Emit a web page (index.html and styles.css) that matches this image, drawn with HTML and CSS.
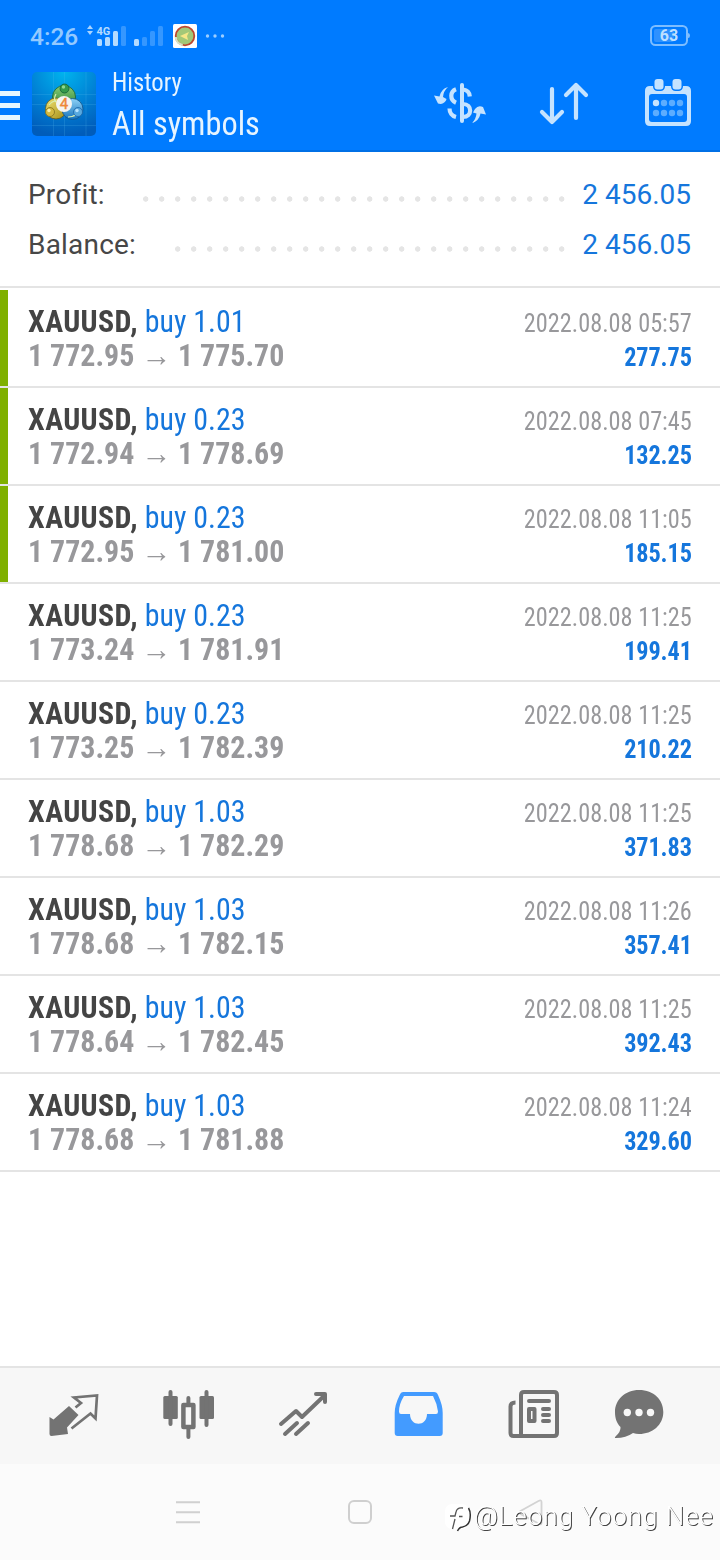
FILE: index.html
```html
<!DOCTYPE html>
<html lang="en">
<head>
<meta charset="utf-8">
<title>History</title>
<link rel="stylesheet" href="styles.css">
</head>
<body>
<div class="screen">
<header class="top">
  <div class="status">
    <span class="clock">4:26</span>
    <svg class="signals" width="140" height="30" viewBox="86 21 140 30">
      <path d="M87 29l3-4 3 4zM87 31l3 4 3-4z" fill="#a9d4ff"/>
      <text x="96.500" y="34.500" class="net">4G</text>
      <g fill="#b4dbff"><rect x="97" y="39" width="5" height="7" rx="1.5"/><rect x="105" y="37" width="5" height="9" rx="1.5"/><rect x="113" y="31" width="5" height="15" rx="1.5"/><rect x="134" y="39" width="5" height="7" rx="1.5"/></g>
      <g fill="#3597ff"><rect x="121" y="26" width="5" height="20" rx="1.5"/><rect x="142" y="37" width="5" height="9" rx="1.5"/><rect x="150" y="31" width="5" height="15" rx="1.5"/><rect x="158" y="26" width="5" height="20" rx="1.5"/></g>
      <rect x="173" y="24" width="24" height="24" rx="1.5" fill="#fff"/>
      <circle cx="185" cy="36" r="9.3" fill="#a3c878" stroke="#bd4630" stroke-width="1.8"/>
      <path d="M175.7 37a9.3 9.3 0 0 0 7 8" fill="none" stroke="#d7e5c6" stroke-width="2.2"/>
      <path d="M180 36l9-4-2 4 1 4z" fill="#f7e787"/>
      <g fill="#9bcdff"><circle cx="207.500" cy="36" r="1.7"/><circle cx="215" cy="36" r="1.7"/><circle cx="222.500" cy="36" r="1.7"/></g>
    </svg>
    <svg class="battery" width="42" height="24" viewBox="649 24 42 24">
      <rect x="651" y="26" width="36" height="19" rx="4.500" fill="none" stroke="#7dbdff" stroke-width="2"/>
      <path d="M688 33q2 0 2 2.500t-2 2.500z" fill="#7dbdff"/>
      <rect x="654" y="29" width="20" height="13" rx="2" fill="#2e91ff"/>
      <text x="669" y="41" text-anchor="middle" class="charge">63</text>
    </svg>
  </div>
  <div class="toolbar">
    <span class="burger"><i></i><i></i><i></i></span>
    <svg class="logo" width="64" height="64" viewBox="0 0 64 64">
      <defs>
        <radialGradient id="bg" cx=".5" cy="0" r="1"><stop offset="0" stop-color="#00b4ee"/><stop offset=".55" stop-color="#0080d4"/><stop offset="1" stop-color="#005cba"/></radialGradient>
        <linearGradient id="gr" x2="0" y2="1"><stop stop-color="#8bcf74"/><stop offset="1" stop-color="#217d39"/></linearGradient>
        <linearGradient id="ye" x2="1" y2="1"><stop stop-color="#f2e476"/><stop offset="1" stop-color="#a28c14"/></linearGradient>
        <linearGradient id="bl" x2="0" y2="1"><stop stop-color="#8dd2f6"/><stop offset="1" stop-color="#1673bd"/></linearGradient>
      </defs>
      <rect width="64" height="64" rx="5" fill="url(#bg)"/>
      <path d="M21.500 0v64M32.500 0v64M54 0v64M0 22.500h64M0 32.500h64M0 53.500h64" stroke="#5abff0" stroke-opacity=".2" fill="none"/>
      <g stroke-width=".8">
        <circle cx="32" cy="25" r="11.500" fill="url(#gr)" stroke="#145f32"/>
        <circle cx="24" cy="36.500" r="10.500" fill="url(#ye)" stroke="#665a16"/>
        <circle cx="40.500" cy="37" r="10.500" fill="url(#bl)" stroke="#125288"/>
        <path d="M24 22q-3 5 0 8M17 33q3-4 7-4M36 45q9 0 12-8" stroke="#d9efb0" stroke-width="1.200" fill="none"/>
        <circle cx="32.500" cy="16.500" r="4.500" fill="#359a4b" stroke="#125d35"/>
        <circle cx="18" cy="40" r="4.500" fill="#d3b940" stroke="#82701a"/>
        <circle cx="46" cy="40" r="4.500" fill="#58a9df" stroke="#1a65a8"/>
        <circle cx="31.500" cy="15" r="1.700" fill="#90d890" stroke="none"/><circle cx="17" cy="38.500" r="1.700" fill="#f7efaa" stroke="none"/><circle cx="45" cy="38.500" r="1.700" fill="#b5e2ff" stroke="none"/>
      </g>
      <circle cx="32" cy="32" r="8" fill="#f4f4f1"/>
      <text x="32" y="37" text-anchor="middle" class="four">4</text>
    </svg>
    <div class="titles"><div class="kicker">History</div><div class="title">All symbols</div></div>
    <svg class="actions" width="260" height="56" viewBox="432 76 260 56" fill="none" stroke="#c5e3ff" stroke-linecap="round" stroke-linejoin="round">
      <path d="M462 85v36" stroke-width="4"/>
      <path d="M456 89.300C450 91.500 449.500 100 456 102.800M449.500 108.500C449.500 112.500 452 116 456 117M463 89.500C467 90 469.500 92 469.800 96.500M463 104C472.500 104 472.500 117 463 117" stroke-width="4.200" stroke-linecap="butt"/>
      <path d="M448 87q-7 2-8.500 9.500l-5.500-1 4 8q5 1.500 8-3l.5-1.500-3.500-2q.5-6 5-10z" fill="#c5e3ff" stroke="none"/>
      <path d="M472 123q7-2 8.500-9.500l5.500 1-3-7.500q-5-2-8 2l-2 3.500 3.500 1q-.5 5.500-4.500 9.500z" fill="#c5e3ff" stroke="none"/>
      <path d="M552 89v33M542 112l10 10 10-10M576 118V86M566 95l10-10 10 10" stroke-width="4.200"/>
      <path d="M650 86h36q5 0 5 5v30q0 5-5 5h-36q-5 0-5-5V91q0-5 5-5z" fill="#c5e3ff" stroke="none"/>
      <rect x="649" y="94" width="38" height="28" rx="3" fill="#007bff" stroke="none"/>
      <rect x="654.500" y="79" width="9" height="10.500" rx="3" fill="#c5e3ff" stroke="#007bff" stroke-width="3" paint-order="stroke"/>
      <rect x="672.500" y="79" width="9" height="10.500" rx="3" fill="#c5e3ff" stroke="#007bff" stroke-width="3" paint-order="stroke"/>
      <g fill="#5cadff" stroke="none"><circle cx="656" cy="103" r="3.200" fill="#c5e3ff"/><circle cx="664" cy="103" r="3.200"/><circle cx="672" cy="103" r="3.200"/><circle cx="680" cy="103" r="3.200"/><circle cx="656" cy="113" r="3.200"/><circle cx="664" cy="113" r="3.200"/><circle cx="672" cy="113" r="3.200"/><circle cx="680" cy="113" r="3.200"/></g>
    </svg>
  </div>
</header>
<section class="summary">
  <div class="sum"><span>Profit:</span><i class="dots long"></i><b>2 456.05</b></div>
  <div class="sum"><span>Balance:</span><i class="dots"></i><b>2 456.05</b></div>
</section>
<main class="deals">
  <article class="deal mark"><div class="left"><div><strong>XAUUSD,</strong> <em>buy 1.01</em></div><div class="price">1 772.95 <u>→</u> 1 775.70</div></div><div class="right"><time>2022.08.08 05:57</time><div class="gain">277.75</div></div></article>
  <article class="deal mark"><div class="left"><div><strong>XAUUSD,</strong> <em>buy 0.23</em></div><div class="price">1 772.94 <u>→</u> 1 778.69</div></div><div class="right"><time>2022.08.08 07:45</time><div class="gain">132.25</div></div></article>
  <article class="deal mark"><div class="left"><div><strong>XAUUSD,</strong> <em>buy 0.23</em></div><div class="price">1 772.95 <u>→</u> 1 781.00</div></div><div class="right"><time>2022.08.08 11:05</time><div class="gain">185.15</div></div></article>
  <article class="deal"><div class="left"><div><strong>XAUUSD,</strong> <em>buy 0.23</em></div><div class="price">1 773.24 <u>→</u> 1 781.91</div></div><div class="right"><time>2022.08.08 11:25</time><div class="gain">199.41</div></div></article>
  <article class="deal"><div class="left"><div><strong>XAUUSD,</strong> <em>buy 0.23</em></div><div class="price">1 773.25 <u>→</u> 1 782.39</div></div><div class="right"><time>2022.08.08 11:25</time><div class="gain">210.22</div></div></article>
  <article class="deal"><div class="left"><div><strong>XAUUSD,</strong> <em>buy 1.03</em></div><div class="price">1 778.68 <u>→</u> 1 782.29</div></div><div class="right"><time>2022.08.08 11:25</time><div class="gain">371.83</div></div></article>
  <article class="deal"><div class="left"><div><strong>XAUUSD,</strong> <em>buy 1.03</em></div><div class="price">1 778.68 <u>→</u> 1 782.15</div></div><div class="right"><time>2022.08.08 11:26</time><div class="gain">357.41</div></div></article>
  <article class="deal"><div class="left"><div><strong>XAUUSD,</strong> <em>buy 1.03</em></div><div class="price">1 778.64 <u>→</u> 1 782.45</div></div><div class="right"><time>2022.08.08 11:25</time><div class="gain">392.43</div></div></article>
  <article class="deal"><div class="left"><div><strong>XAUUSD,</strong> <em>buy 1.03</em></div><div class="price">1 778.68 <u>→</u> 1 781.88</div></div><div class="right"><time>2022.08.08 11:24</time><div class="gain">329.60</div></div></article>
</main>
<nav class="tabs">
  <svg width="52" height="56" viewBox="48 1386 52 56"><path d="M49.500 1417l4 2.500 15.500-13.500 9.500 9-11.500 12.500 1 6.500-16.500 2q-2 0-2-2z" fill="#737373"/><path d="M75.500 1407.500l5.500-4.500-7-5.500 23-2-1.500 23-5-5L71.500 1428.500" fill="none" stroke="#737373" stroke-width="2.700"/></svg>
  <svg width="52" height="56" viewBox="162 1386 52 56" fill="#737373"><rect x="163.300" y="1396" width="14.500" height="23" rx="1.500"/><rect x="199.500" y="1396" width="14.500" height="23" rx="1.500"/><path d="M170.500 1392v32M206.500 1392v33M188.400 1398v6M188.400 1428v9" stroke="#737373" stroke-width="4" stroke-linecap="round"/><rect x="183.400" y="1405" width="10" height="22" fill="none" stroke="#737373" stroke-width="4.500" stroke-linejoin="round"/></svg>
  <svg width="52" height="56" viewBox="277 1386 52 56" fill="none" stroke="#737373" stroke-width="4" stroke-linecap="round" stroke-linejoin="round"><path d="M281 1424l15-13 6 6 23-22M316 1394h9v8M285 1434l12-11M296 1434l12-11"/></svg>
  <svg width="52" height="56" viewBox="392 1386 52 56"><path fill-rule="evenodd" fill="#439bff" d="M403 1392h31q3 0 4 3 4.700 10 4.700 18v20q0 3-3 3h-42q-3 0-3-3v-20q0-8 5-18 1-3 3.300-3zM404 1396q-5 8-5 15.500 0 2.500 2 2.500h9c0 13 17 13 17 0h9q2 0 2-2.500-1-8-5-15.500z"/></svg>
  <svg width="52" height="56" viewBox="508 1386 52 56" fill="none" stroke="#737373" stroke-width="4" stroke-linejoin="round"><path d="M515.500 1402.500q-5 0-5 4V1433q0 3 3 3h40.500q3 0 3-3v-38q0-3-3-3h-30q-3 0-3 3v41"/><path d="M529 1401h20M543 1409h6M543 1415h6M543 1421h6" stroke-linecap="round"/><rect x="529" y="1409" width="5.500" height="12"/></svg>
  <svg width="52" height="56" viewBox="613 1386 52 56"><path fill="#737373" d="M639 1390c15 0 24.300 10 24.300 22 0 13-11 22-24.300 22q-3 0-6-1-7 5-17 5-2 0-.5-1.500 5.500-5 5-9.500c-4-4-5.500-9-5.500-15 0-12 10-22 24-22z"/><g fill="#f7f7f7"><circle cx="627.300" cy="1412.500" r="3.700"/><circle cx="639" cy="1412.500" r="3.700"/><circle cx="650.500" cy="1412.500" r="3.700"/></g></svg>
</nav>
<footer class="system">
  <svg width="720" height="96" viewBox="0 1464 720 96">
    <path d="M176 1502.300h24M176 1512.300h24M176 1522.300h24" stroke="#d0d0d0" stroke-width="2"/>
    <rect x="349" y="1501" width="22" height="22" rx="5" fill="none" stroke="#cfcfcf" stroke-width="2"/>
    <path d="M541.500 1502v21q0 2-2 1l-19-10q-2-1.500 0-3l18-10q3-1.500 3 1z" fill="none" stroke="#d3d3d3" stroke-width="1.800"/>
    <rect x="445" y="1504" width="24" height="25" rx="7" fill="#fff"/>
    <path d="M463 1508q-6-1-7 4l-1 4h-5M455 1519l-2.500 10M459 1516.500h3.500" stroke="#555" stroke-width="1.300" fill="none"/>
    <path d="M468.500 1508q3 5 1 13-1.500 5-7 6-3 0-5 4" stroke="#333" stroke-width="1.500" fill="none"/>
    <text x="474" y="1525" class="credit" textLength="239">@Leong Yoong Nee</text>
  </svg>
</footer>
</div>
</body>
</html>
```
FILE: styles.css
```css
* { box-sizing: border-box; }
body { margin: 0; background: #fff; font-family: Roboto, "Liberation Sans", sans-serif; }
svg { display: block; }
.screen { width: 720px; height: 1560px; display: flex; flex-direction: column; }
.top { height: 152px; flex: none; background: #007bff; border-bottom: 2px solid #0070e6; color: #e6f4ff; }
.status { height: 72px; display: flex; align-items: flex-start; padding: 21px 29px 0 30px; }
.clock { width: 56px; font-size: 24.500px; font-weight: 500; line-height: 32px; color: #94c9ff; }
.battery { margin: 3px 0 0 auto; }
.net { font: bold 11px Roboto, sans-serif; fill: #b4dbff; }
.charge { font: bold 16px Roboto, sans-serif; fill: #bfe0ff; }
.four { font: 15px Roboto, sans-serif; fill: #ee8838; stroke: #ee8838; stroke-width: .4px; }
.toolbar { display: flex; align-items: flex-start; padding-right: 28px; }
.burger { width: 20px; margin: 19px 12px 0 0; display: flex; flex-direction: column; gap: 7px; }
.burger i { height: 5px; background: #e6f6ff; }
.titles { margin-left: 16px; font-family: "Roboto Condensed", Roboto, sans-serif; font-stretch: 75%; white-space: nowrap; transform: scaleX(.951); transform-origin: left; }
.kicker { font-size: 26px; line-height: 20px; }
.title { font-size: 34px; line-height: 34px; margin-top: 14px; }
.actions { margin: 4px 0 0 auto; }
.summary { height: 136px; flex: none; border-bottom: 2px solid #e4e4e4; padding: 18px 28px 0; }
.sum { display: flex; height: 50px; line-height: 50px; font-size: 28px; color: #474747; }
.sum span { letter-spacing: .2px; }
.sum b { font-weight: 400; color: #1576dc; width: 110px; padding-right: 1px; text-align: right; white-space: nowrap; }
.dots { width: 394px; height: 8px; margin: 25px 14px 0 auto; background: radial-gradient(circle at 3.700px 4px, #e5e5e5 2.400px, transparent 3px) 0 0 / 16px 8px; }
.dots.long { width: 426px; }
.deals { padding-top: 2px; flex: 1; font-family: "Roboto Condensed", Roboto, sans-serif; font-stretch: 75%; }
.deal { height: 98px; border-bottom: 2px solid #e4e4e4; display: flex; justify-content: space-between; padding: 0 28px; white-space: nowrap; }
.mark { box-shadow: inset 8px 0 #7fb000; }
.left { padding-top: 14px; font-size: 32px; line-height: 34px; transform: scaleX(.935); transform-origin: left; }
.left strong { color: #444; letter-spacing: .42px; }
.left em { font-style: normal; color: #1576dc; }
.price { font-weight: 700; color: #98989b; }
.price u { display: inline-block; text-decoration: none; font-weight: 400; }
.right { padding-top: 16px; font-size: 26px; line-height: 34px; color: #98989b; text-align: right; transform: scaleX(.934); transform-origin: right; }
.right time { display: block; }
.gain { font-weight: 700; color: #1576dc; letter-spacing: -.15px; }
.tabs { height: 98px; flex: none; background: #f7f7f7; border-top: 2px solid #e4e4e4; display: grid; grid-template-columns: 114px 115px 115px 116px 105px 52px; padding: 18px 0 0 48px; }
.system { height: 96px; flex: none; background: #fbfbfb; }
.credit { font: 300 26px Roboto, sans-serif; fill: #fff; filter: drop-shadow(1.200px 1.200px .2px #444); }
```
